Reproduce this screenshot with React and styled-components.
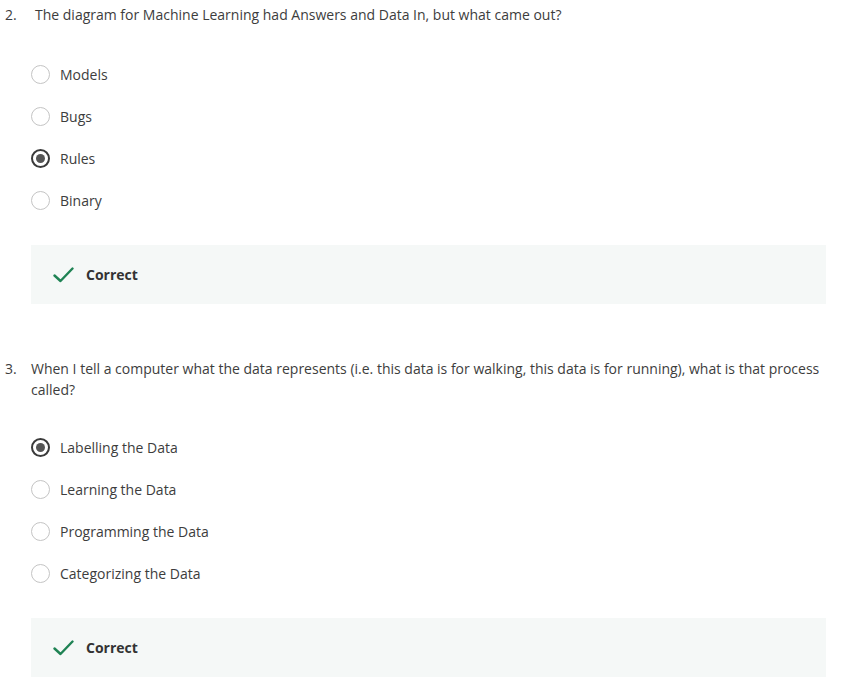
import React from 'react';
import styled, { createGlobalStyle } from 'styled-components';

const GlobalStyle = createGlobalStyle`
  body {
    margin: 0;
    background: #fff;
    font-family: "Open Sans", "Liberation Sans", sans-serif;
    color: #333;
  }
`;

const Page = styled.div`
  width: 841px;
  padding: 0 15px 0 5px;
  box-sizing: border-box;
`;

const QuestionBlock = styled.section`
  padding-top: ${(p) => p.top}px;
`;

const Prompt = styled.div`
  display: flex;
  font-size: 14px;
  line-height: 21px;
  color: #3d3d3d;
`;

const Number = styled.span`
  flex: 0 0 ${(p) => p.width}px;
`;

const PromptText = styled.p`
  margin: 0;
`;

const Options = styled.div`
  display: flex;
  flex-direction: column;
  gap: 24px;
  padding: ${(p) => p.top}px 0 0 26px;
`;

const Option = styled.label`
  display: flex;
  align-items: center;
  gap: 10px;
  height: 18px;
  font-size: 14px;
  color: #3d3d3d;
`;

const Radio = styled.span`
  box-sizing: border-box;
  width: 19px;
  height: 19px;
  border-radius: 50%;
  border: ${(p) => (p.checked ? '2px solid #3a3a3a' : '1.5px solid #c4c4c4')};
  display: flex;
  align-items: center;
  justify-content: center;

  &::after {
    content: '';
    display: ${(p) => (p.checked ? 'block' : 'none')};
    width: 9px;
    height: 9px;
    border-radius: 50%;
    background: #555;
  }
`;

const Feedback = styled.div`
  margin: ${(p) => p.top}px 0 0 26px;
  height: 59px;
  background: #f5f8f7;
  display: flex;
  align-items: center;
  gap: 12px;
  padding-left: 22px;
`;

const FeedbackText = styled.span`
  font-size: 14px;
  font-weight: 700;
  color: #333;
`;

function Check() {
  return (
    <svg width="21" height="16" viewBox="0 0 21 16" fill="none">
      <path d="M1.5 8.5 L7.5 14 L19.5 1.5" stroke="#1f8354" strokeWidth="2.4" strokeLinecap="round" strokeLinejoin="round" />
    </svg>
  );
}

function Question({ number, numWidth, text, options, answer, top, optTop, fbTop }) {
  return (
    <QuestionBlock top={top}>
      <Prompt>
        <Number width={numWidth}>{number}.</Number>
        <PromptText>{text}</PromptText>
      </Prompt>
      <Options top={optTop}>
        {options.map((o) => (
          <Option key={o}>
            <Radio checked={o === answer} />
            {o}
          </Option>
        ))}
      </Options>
      <Feedback top={fbTop}>
        <Check />
        <FeedbackText>Correct</FeedbackText>
      </Feedback>
    </QuestionBlock>
  );
}

export default function App() {
  return (
    <>
      <GlobalStyle />
      <Page>
        <Question
          number={2}
          numWidth={30}
          text="The diagram for Machine Learning had Answers and Data In, but what came out?"
          options={['Models', 'Bugs', 'Rules', 'Binary']}
          answer="Rules"
          top={4}
          optTop={40}
          fbTop={36}
        />
        <Question
          number={3}
          numWidth={26}
          text="When I tell a computer what the data represents (i.e. this data is for walking, this data is for running), what is that process called?"
          options={['Labelling the Data', 'Learning the Data', 'Programming the Data', 'Categorizing the Data']}
          answer="Labelling the Data"
          top={54}
          optTop={38}
          fbTop={36}
        />
      </Page>
    </>
  );
}
